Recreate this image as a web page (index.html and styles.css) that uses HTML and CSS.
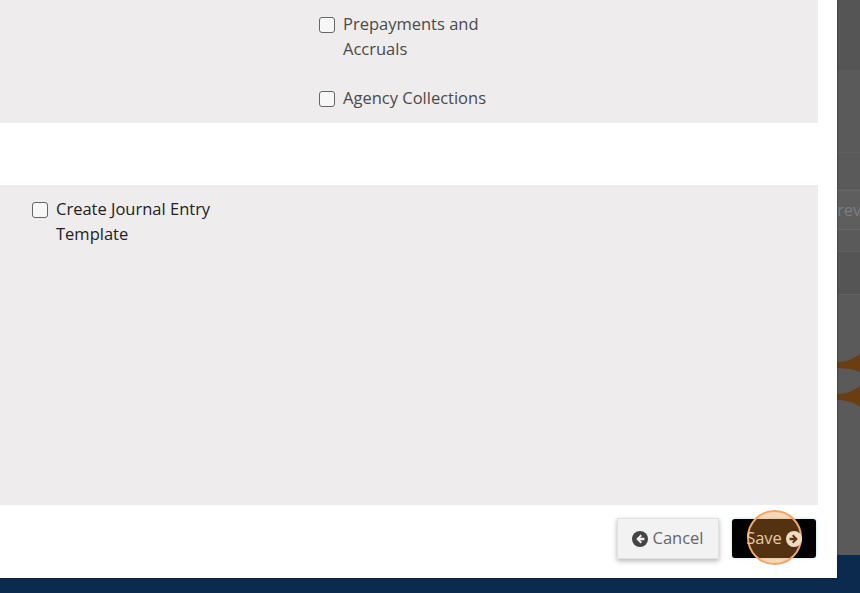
FILE: index.html
```html
<!DOCTYPE html>
<html lang="en">
<head>
<meta charset="UTF-8">
<meta name="viewport" content="width=device-width, initial-scale=1.0">
<title>Journal Entry Options</title>
<link rel="stylesheet" href="styles.css">
</head>
<body>

<div class="page">
  <div class="page-top"></div>
  <div class="page-row"></div>
  <div class="page-row page-row-tall"></div>
  <div class="page-tab">rev</div>
  <div class="page-row page-row-short"></div>
  <div class="page-dark"></div>
  <div class="page-art">
    <svg width="23" height="70" viewBox="0 0 23 70">
      <path d="M0 22 C9 22 16 19 23 14 L23 32 C16 29 9 28 0 28 Z" fill="#6b3d12"/>
      <path d="M0 54 C9 54 16 51 23 46 L23 67 C16 62 9 60 0 60 Z" fill="#6b3d12"/>
    </svg>
  </div>
  <div class="page-footer"></div>
</div>

<div class="modal">
  <section class="panel panel-top">
    <label class="check">
      <input type="checkbox">
      <span>Prepayments and Accruals</span>
    </label>
    <label class="check">
      <input type="checkbox">
      <span>Agency Collections</span>
    </label>
  </section>

  <section class="panel panel-bottom">
    <label class="check check-dark">
      <input type="checkbox">
      <span>Create Journal Entry Template</span>
    </label>
  </section>

  <div class="actions">
    <button type="button" class="btn btn-cancel">
      <svg class="btn-icon" viewBox="0 0 16 16">
        <circle cx="8" cy="8" r="8" fill="#444"/>
        <path d="M8.6 3.6 L4.2 8 L8.6 12.4 L10 11 L8 9.2 H12.4 V6.8 H8 L10 5 Z" fill="#f2f2f2"/>
      </svg>
      <span class="btn-label">Cancel</span>
    </button>
    <button type="button" class="btn btn-save">
      <span class="btn-label">Save</span>
      <svg class="btn-icon" viewBox="0 0 16 16">
        <circle cx="8" cy="8" r="8" fill="#f0dcc6"/>
        <path d="M7.4 3.6 L11.8 8 L7.4 12.4 L6 11 L8 9.2 H3.6 V6.8 H8 L6 5 Z" fill="#5c3411"/>
      </svg>
      <span class="click-mark"></span>
    </button>
  </div>
</div>

</body>
</html>
```

FILE: styles.css
```css
* {
  box-sizing: border-box;
}

html,
body {
  margin: 0;
  padding: 0;
  height: 593px;
  overflow: hidden;
}

body {
  font-family: "Open Sans", Arial, sans-serif;
  font-size: 16.5px;
  line-height: 25px;
  color: #4a4a4a;
}

/* greyed out page behind the dialog */
.page {
  height: 593px;
  background-color: #5a5a5a;
  display: flex;
  flex-direction: column;
  align-items: flex-end;
}

.page > div {
  width: 23px;
  flex: none;
}

.page-top {
  height: 70px;
  background-color: #555;
}

.page-row {
  height: 83px;
  border-bottom: 1px solid #606060;
}

.page-row-tall {
  height: 37px;
}

.page-tab {
  height: 40px;
  line-height: 38px;
  overflow: hidden;
  background-color: #5e5e5e;
  border-top: 1px solid #686868;
  border-bottom: 1px solid #686868;
  color: #7d7d7d;
  white-space: nowrap;
}

.page-row-short {
  height: 22px;
}

.page-dark {
  height: 43px;
  background-color: #555;
  border-bottom: 1px solid #606060;
}

.page-art {
  height: 260px;
  padding-top: 45px;
}

.page-art svg {
  display: block;
}

.page > .page-footer {
  width: 100%;
  height: 38px;
  background-color: #0b2a4d;
}

.modal {
  position: absolute;
  top: 0;
  left: 0;
  width: 837px;
  height: 578px;
  padding-right: 19px;
  background-color: #fff;
  box-shadow: 0 0 2px rgba(0, 0, 0, 0.5);
}

.panel {
  background-color: #eeecec;
}

.panel-top {
  height: 123px;
  padding: 11px 0 0 319px;
}

.panel-bottom {
  height: 320px;
  margin-top: 62px;
  padding: 11px 0 0 32px;
}

.check {
  display: flex;
  align-items: flex-start;
  gap: 8px;
  width: 172px;
  margin-bottom: 24px;
}

.check-dark {
  width: 190px;
  color: #222;
}

.check input {
  width: 16px;
  height: 16px;
  margin: 6px 0 0;
  flex: none;
  appearance: none;
  background-color: #f8f7f7;
  border: 1px solid #666;
  border-radius: 3px;
}

.actions {
  display: flex;
  justify-content: flex-end;
  align-items: center;
  gap: 13px;
  padding: 13px 2px 0 0;
}

.btn {
  font-family: inherit;
  font-size: 16.5px;
  display: flex;
  align-items: center;
  justify-content: center;
  gap: 4px;
  border: none;
  padding: 0;
}

.btn-label {
  position: relative;
  top: -1px;
}

.btn-icon {
  position: relative;
  z-index: 1;
  width: 16px;
  height: 16px;
  flex: none;
}

.btn-cancel {
  width: 102px;
  height: 41px;
  color: #666;
  background-color: #f2f2f2;
  border: 1px solid #e2e2e2;
  box-shadow: 0 2px 5px rgba(0, 0, 0, 0.3);
}

.btn-save {
  position: relative;
  width: 84px;
  height: 39px;
  color: #e6c9a8;
  background-color: #000;
  border-radius: 3px;
  box-shadow: 0 0 3px rgba(120, 200, 210, 0.6);
}

.btn-save .btn-label {
  z-index: 1;
}

/* click marker drawn over the button */
.click-mark {
  position: absolute;
  left: 15px;
  top: -9px;
  width: 55px;
  height: 55px;
  border: 2px solid #f0a868;
  border-radius: 50%;
  background-color: rgba(240, 140, 50, 0.35);
}
```
